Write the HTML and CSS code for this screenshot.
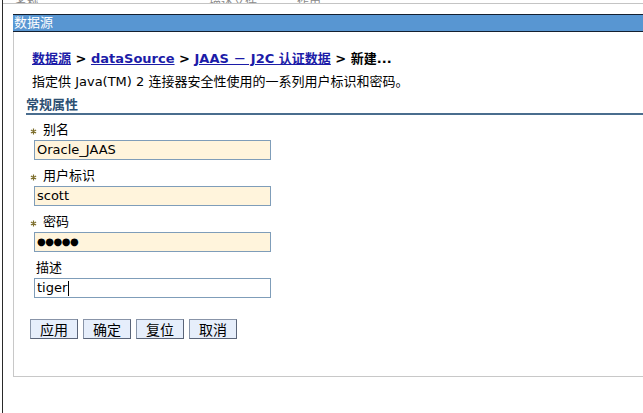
FILE: index.html
```html
<!DOCTYPE html>
<html lang="zh-CN">
<head>
<meta charset="utf-8">
<title>数据源</title>
<link rel="stylesheet" href="styles.css">
</head>
<body>
<div class="rail">
  <div class="topstrip">
    <span class="ts ts1">名称</span><span class="ts ts2">描述文件</span><span class="ts ts3">作用</span>
  </div>
  <div class="panel">
    <div class="titlebar">数据源</div>
    <div class="box">
      <div class="crumbs">
        <a href="#">数据源</a> &gt; <a href="#">dataSource</a> &gt; <a href="#">JAAS － J2C 认证数据</a> &gt; 新建...
      </div>
      <div class="desc">指定供 Java(TM) 2 连接器安全性使用的一系列用户标识和密码。</div>
      <div class="section">常规属性</div>
      <div class="fields">
        <div class="field">
          <div class="label"><span class="star"><svg width="7" height="7" viewBox="0 0 7 7"><path d="M3.5 0.5V6.5M0.9 2L6.1 5M0.9 5L6.1 2" stroke="#7d6e2c" stroke-width="1.2"/></svg></span>别名</div>
          <div class="input req">Oracle_JAAS</div>
        </div>
        <div class="field">
          <div class="label"><span class="star"><svg width="7" height="7" viewBox="0 0 7 7"><path d="M3.5 0.5V6.5M0.9 2L6.1 5M0.9 5L6.1 2" stroke="#7d6e2c" stroke-width="1.2"/></svg></span>用户标识</div>
          <div class="input req">scott</div>
        </div>
        <div class="field">
          <div class="label"><span class="star"><svg width="7" height="7" viewBox="0 0 7 7"><path d="M3.5 0.5V6.5M0.9 2L6.1 5M0.9 5L6.1 2" stroke="#7d6e2c" stroke-width="1.2"/></svg></span>密码</div>
          <div class="input req pwd">●●●●●</div>
        </div>
        <div class="field">
          <div class="label plain">描述</div>
          <div class="input">tiger<span class="caret"></span></div>
        </div>
      </div>
      <div class="buttons">
        <button class="btn">应用</button>
        <button class="btn">确定</button>
        <button class="btn">复位</button>
        <button class="btn">取消</button>
      </div>
    </div>
  </div>
</div>
</body>
</html>
```
FILE: styles.css
```css
html, body {
  margin: 0;
  padding: 0;
  background: #ffffff;
}
body {
  font-family: "DejaVu Sans", "Noto Sans CJK SC", sans-serif;
  font-size: 13px;
  color: #000;
  width: 643px;
  height: 413px;
  overflow: hidden;
}
.rail {
  margin-left: 2px;
  border-left: 1px solid #2a2a2a;
  height: 413px;
  box-sizing: border-box;
}
.topstrip {
  height: 3px;
  overflow: hidden;
  border-bottom: 1px solid #c4c4c4;
  display: flex;
  font-size: 12px;
  line-height: 6px;
  color: #8a8a8a;
}
.ts1 { margin-left: 12px; }
.ts2 { margin-left: 170px; }
.ts3 { margin-left: 40px; }
.panel {
  margin-top: 10px;
  margin-left: 10px;
}
.titlebar {
  background: #5896d2;
  border-top: 1px solid #142030;
  border-bottom: 1px solid #142030;
  color: #fff;
  height: 16px;
  line-height: 16px;
  font-size: 13px;
  padding-left: 1px;
}
.box {
  border-left: 1px solid #c8c8c8;
  border-bottom: 1px solid #c8c8c8;
  height: 325px;
  padding-top: 19px;
}
.crumbs {
  padding-left: 18px;
  font-weight: bold;
  line-height: 16px;
}
.crumbs a {
  color: #1c1ca8;
  text-decoration: underline;
}
.desc {
  padding-left: 18px;
  margin-top: 7px;
  line-height: 16px;
}
.section {
  margin-top: 7px;
  margin-left: 12px;
  font-weight: bold;
  color: #2d4f72;
  line-height: 16px;
  border-bottom: 2px solid #4a6d8e;
}
.fields {
  margin-top: 7px;
  padding-left: 20px;
}
.field {
  margin-bottom: 8px;
}
.label {
  line-height: 16px;
  margin-bottom: 2px;
  display: flex;
  align-items: center;
}
.label.plain {
  padding-left: 2px;
}
.star {
  width: 13px;
  height: 16px;
  margin-left: -4px;
  display: flex;
  align-items: flex-end;
  padding-bottom: 3px;
  box-sizing: border-box;
}
.star svg {
  display: block;
}
.input {
  width: 237px;
  height: 20px;
  box-sizing: border-box;
  border: 1px solid #7f9db9;
  background: #ffffff;
  padding-left: 2px;
  line-height: 18px;
  font-size: 13px;
  display: flex;
  align-items: center;
}
.input.req {
  background: #fff4dc;
}
.input.pwd {
  font-size: 10px;
  letter-spacing: -0.5px;
}
.caret {
  display: inline-block;
  width: 1px;
  height: 15px;
  background: #000;
  margin-left: 1px;
}
.buttons {
  margin-top: 21px;
  padding-left: 16px;
  display: flex;
  gap: 5px;
}
.btn {
  width: 48px;
  height: 20px;
  box-sizing: border-box;
  margin: 0;
  padding: 0;
  font-family: "Noto Sans CJK SC", "DejaVu Sans", sans-serif;
  font-size: 14px;
  line-height: 18px;
  color: #000;
  background: #e6eefb;
  border: 1px solid #8894a8;
  border-right-color: #5a6478;
  border-bottom-color: #5a6478;
}
```
